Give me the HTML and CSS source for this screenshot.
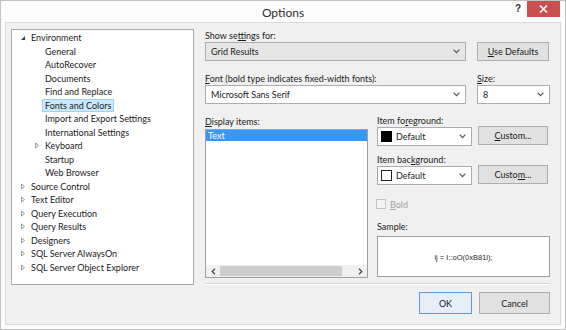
FILE: index.html
```html
<!DOCTYPE html>
<html>
<head>
<meta charset="utf-8">
<title>Options</title>
<link rel="stylesheet" href="styles.css">
</head>
<body>
<div class="window">
  <div class="titlebar">
    <span></span>
    <span class="title">Options</span>
    <div class="caption-btns">
      <span class="help">?</span>
      <span class="close"><svg width="9" height="8" viewBox="0 0 9 8"><path d="M1 0.5 8 7.5M8 0.5 1 7.5" stroke="#fff" stroke-width="1.6"/></svg></span>
    </div>
  </div>
  <div class="client">
    <div class="tree">
      <div class="node l0"><span class="tog"><svg width="6" height="6" viewBox="0 0 6 6"><path d="M5 1 5 5 1 5Z" fill="#3c3c3c"/></svg></span>Environment</div>
      <div class="node l1"><span class="tog"></span>General</div>
      <div class="node l1"><span class="tog"></span>AutoRecover</div>
      <div class="node l1"><span class="tog"></span>Documents</div>
      <div class="node l1"><span class="tog"></span>Find and Replace</div>
      <div class="node l1"><span class="tog"></span><span class="sel">Fonts and Colors</span></div>
      <div class="node l1"><span class="tog"></span>Import and Export Settings</div>
      <div class="node l1"><span class="tog"></span>International Settings</div>
      <div class="node l1 lk"><span class="tog"><svg width="6" height="7" viewBox="0 0 6 7"><path d="M1.5 1 4.5 3.5 1.5 6Z" fill="none" stroke="#9a9a9a"/></svg></span>Keyboard</div>
      <div class="node l1"><span class="tog"></span>Startup</div>
      <div class="node l1"><span class="tog"></span>Web Browser</div>
      <div class="node l0"><span class="tog"><svg width="6" height="7" viewBox="0 0 6 7"><path d="M1.5 1 4.5 3.5 1.5 6Z" fill="none" stroke="#9a9a9a"/></svg></span>Source Control</div>
      <div class="node l0"><span class="tog"><svg width="6" height="7" viewBox="0 0 6 7"><path d="M1.5 1 4.5 3.5 1.5 6Z" fill="none" stroke="#9a9a9a"/></svg></span>Text Editor</div>
      <div class="node l0"><span class="tog"><svg width="6" height="7" viewBox="0 0 6 7"><path d="M1.5 1 4.5 3.5 1.5 6Z" fill="none" stroke="#9a9a9a"/></svg></span>Query Execution</div>
      <div class="node l0"><span class="tog"><svg width="6" height="7" viewBox="0 0 6 7"><path d="M1.5 1 4.5 3.5 1.5 6Z" fill="none" stroke="#9a9a9a"/></svg></span>Query Results</div>
      <div class="node l0"><span class="tog"><svg width="6" height="7" viewBox="0 0 6 7"><path d="M1.5 1 4.5 3.5 1.5 6Z" fill="none" stroke="#9a9a9a"/></svg></span>Designers</div>
      <div class="node l0"><span class="tog"><svg width="6" height="7" viewBox="0 0 6 7"><path d="M1.5 1 4.5 3.5 1.5 6Z" fill="none" stroke="#9a9a9a"/></svg></span>SQL Server AlwaysOn</div>
      <div class="node l0"><span class="tog"><svg width="6" height="7" viewBox="0 0 6 7"><path d="M1.5 1 4.5 3.5 1.5 6Z" fill="none" stroke="#9a9a9a"/></svg></span>SQL Server Object Explorer</div>
    </div>

    <div class="panel">
      <div class="top-grid">
        <div class="lbl">Show se<u>t</u>tings for:</div>
        <div></div>
        <div class="combo gray"><span>Grid Results</span><svg class="chev" width="7" height="5" viewBox="0 0 7 5"><path d="M.6 .6 3.5 3.6 6.4 .6" fill="none" stroke="#555" stroke-width="1.2"/></svg></div>
        <button class="btn defaults"><u>U</u>se Defaults</button>
        <div class="lbl gap"><u>F</u>ont (bold type indicates fixed-width fonts):</div>
        <div class="lbl gap"><u>S</u>ize:</div>
        <div class="combo"><span>Microsoft Sans Serif</span><svg class="chev" width="7" height="5" viewBox="0 0 7 5"><path d="M.6 .6 3.5 3.6 6.4 .6" fill="none" stroke="#555" stroke-width="1.2"/></svg></div>
        <div class="combo"><span>8</span><svg class="chev" width="7" height="5" viewBox="0 0 7 5"><path d="M.6 .6 3.5 3.6 6.4 .6" fill="none" stroke="#555" stroke-width="1.2"/></svg></div>
      </div>

      <div class="lower">
        <div class="left-col">
          <div class="lbl"><u>D</u>isplay items:</div>
          <div class="list">
            <div class="items">
              <div class="item selected">Text</div>
            </div>
            <div class="hscroll">
              <span class="arr"><svg width="5" height="7" viewBox="0 0 5 7"><path d="M4 .8 1.2 3.5 4 6.2" fill="none" stroke="#444" stroke-width="1.2"/></svg></span>
              <span class="thumb"></span>
              <span class="track"></span>
              <span class="arr"><svg width="5" height="7" viewBox="0 0 5 7"><path d="M1 .8 3.8 3.5 1 6.2" fill="none" stroke="#444" stroke-width="1.2"/></svg></span>
            </div>
          </div>
        </div>
        <div class="right-col">
          <div class="lbl">Item fo<u>r</u>eground:</div>
          <div class="pick-row">
            <div class="combo color"><span class="swatch black"></span><span class="cname">Default</span><svg class="chev" width="7" height="5" viewBox="0 0 7 5"><path d="M.6 .6 3.5 3.6 6.4 .6" fill="none" stroke="#555" stroke-width="1.2"/></svg></div>
            <button class="btn custom"><u>C</u>ustom...</button>
          </div>
          <div class="lbl bg-lbl">Item bac<u>k</u>ground:</div>
          <div class="pick-row">
            <div class="combo color"><span class="swatch white"></span><span class="cname">Default</span><svg class="chev" width="7" height="5" viewBox="0 0 7 5"><path d="M.6 .6 3.5 3.6 6.4 .6" fill="none" stroke="#555" stroke-width="1.2"/></svg></div>
            <button class="btn custom">Custo<u>m</u>...</button>
          </div>
          <div class="check-row"><span class="cbox"></span><span class="disabled"><u>B</u>old</span></div>
          <div class="lbl sample-lbl">Sample:</div>
          <div class="sample"><span class="sample-text">ij = I::oO(0xB81l);</span></div>
        </div>
      </div>

      <div class="sep"></div>
      <div class="footer">
        <button class="btn ok">OK</button>
        <button class="btn cancel">Cancel</button>
      </div>
    </div>
  </div>
</div>
</body>
</html>
```

FILE: styles.css
```css
* { box-sizing: border-box; }

body {
  margin: 0;
  background: #ffffff;
  font-family: Lato, "Open Sans", sans-serif;
  font-size: 9px;
  color: #1b1b1b;
}

.window {
  width: 566px;
  height: 330px;
  border: 1px solid #c2c2c2;
  background: #fcfcfc;
  display: flex;
  flex-direction: column;
}

.titlebar {
  height: 21px;
  display: grid;
  grid-template-columns: 1fr auto 1fr;
  align-items: center;
}

.title {
  font-size: 12px;
  color: #2e2e2e;
  padding-top: 2px;
}

.caption-btns {
  justify-self: end;
  align-self: start;
  display: flex;
  align-items: flex-start;
  margin-right: 5px;
}

.help {
  font-size: 10px;
  font-weight: bold;
  color: #333;
  margin: 2px 6px 0 0;
  font-family: "Liberation Sans", sans-serif;
}

.close {
  width: 33px;
  height: 16px;
  background: #c9504f;
  display: flex;
  align-items: center;
  justify-content: center;
}

.client {
  flex: 1;
  margin: 0 4px 4px 4px;
  border: 1px solid #dadada;
  background: #f0f0f0;
  display: flex;
  gap: 11px;
  padding: 6px 0 0 5px;
}

/* tree */
.tree {
  width: 183px;
  height: 256px;
  border: 1px solid #a9a9a9;
  background: #fff;
  padding-top: 1px;
}

.node {
  height: 13.5px;
  display: flex;
  align-items: center;
  white-space: nowrap;
  padding-left: 5px;
}

.node.l1 { padding-left: 19px; }

.tog {
  width: 14px;
  flex: none;
  display: flex;
  align-items: center;
  padding-left: 3px;
}

.sel {
  background: #cce8ff;
  border: 1px solid #99d1ff;
  padding: 0 2px;
  margin-left: -3px;
  line-height: 11px;
}

/* right panel */
.panel {
  width: 345px;
  display: flex;
  flex-direction: column;
}

.lbl {
  line-height: 13px;
  height: 13px;
  white-space: nowrap;
}

.lbl.gap { margin-top: 11px; }

.top-grid {
  display: grid;
  grid-template-columns: 261px 73px;
  column-gap: 11px;
}

.combo {
  height: 19px;
  border: 1px solid #acacac;
  background: #fff;
  display: flex;
  align-items: center;
  justify-content: space-between;
  padding: 0 5px 0 5px;
}

.combo.gray {
  background: #e6e6e6;
}

.chev { flex: none; }

.btn {
  font: inherit;
  color: #1b1b1b;
  height: 19px;
  border: 1px solid #adadad;
  background: #e1e1e1;
  padding: 0;
  text-align: center;
}

.defaults { width: 72px; }

.lower {
  margin-top: 11px;
  display: grid;
  grid-template-columns: 163px 173px;
  column-gap: 9px;
}

.left-col .lbl { margin-bottom: 1px; }

.list {
  height: 149px;
  border: 1px solid #a0a0a0;
  background: #fff;
  display: flex;
  flex-direction: column;
}

.items { flex: 1; }

.item {
  height: 11px;
  line-height: 11px;
  padding-left: 2px;
}

.item.selected {
  background: #3399ff;
  color: #fff;
}

.hscroll {
  height: 12px;
  display: flex;
  background: #f0f0f0;
}

.arr {
  width: 14px;
  display: flex;
  align-items: center;
  justify-content: center;
}

.thumb {
  width: 122px;
  background: #cdcdcd;
  margin: 1px 0;
}

.track { flex: 1; }

.right-col {
  display: flex;
  flex-direction: column;
}

.right-col .lbl { height: 12px; line-height: 12px; }

.pick-row {
  display: flex;
  gap: 6px;
  height: 19px;
}

.combo.color {
  width: 95px;
  justify-content: flex-start;
  padding-left: 3px;
}

.swatch {
  width: 11px;
  height: 11px;
  flex: none;
  margin-right: 4px;
}

.swatch.black { background: #000; }
.swatch.white { background: #fff; border: 1px solid #222; }

.cname { flex: 1; }

.custom { width: 70px; margin-top: -1px; }

.bg-lbl { margin-top: 8px; }

.check-row {
  margin-top: 13px;
  height: 12px;
  display: flex;
  align-items: center;
  gap: 4px;
}

.cbox {
  width: 10px;
  height: 10px;
  border: 1px solid #c6c6c6;
  background: #f4f4f4;
  margin-left: -1px;
}

.disabled { color: #a3a3a3; }

.sample-lbl { margin-top: 11px; }

.sample {
  margin-top: 3px;
  height: 41px;
  border: 1px solid #a0a0a0;
  background: #fff;
  display: flex;
  align-items: center;
  justify-content: center;
}

.sample-text {
  font-family: "Liberation Sans", sans-serif;
  font-size: 7.5px;
  color: #2a2a2a;
  padding-top: 2px;
}

.sep {
  margin-top: 5px;
  height: 2px;
  border-top: 1px solid #d5d5d5;
  border-bottom: 1px solid #fff;
}

.footer {
  margin-top: 7px;
  display: flex;
  justify-content: flex-end;
  gap: 7px;
}

.footer .btn { height: 22px; }

.ok {
  width: 53px;
  border-color: #5b9bd5;
  background: #e5eef7;
}

.cancel { width: 71px; }
```
